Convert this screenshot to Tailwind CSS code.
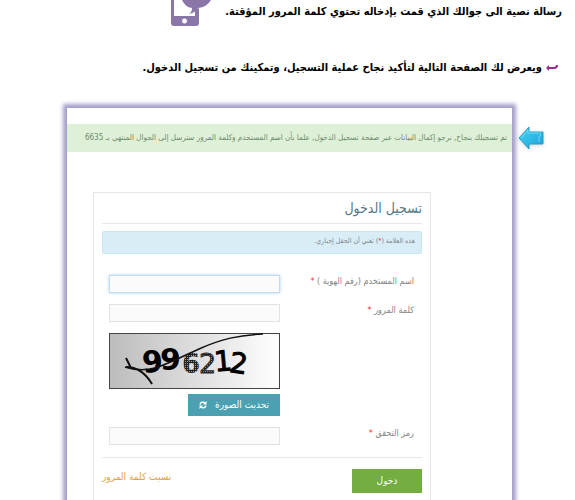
<!DOCTYPE html>
<html lang="ar" dir="rtl">
<head>
    <meta charset="utf-8"/>
    <meta content="width=device-width, initial-scale=1.0" name="viewport"/>
    <title>تسجيل الدخول</title>
    <script src="https://cdn.jsdelivr.net/npm/@tailwindcss/browser@4"></script>
</head>
<body class="bg-white font-['DejaVu_Sans_Condensed','DejaVu_Sans',sans-serif] text-black">
    <main class="flex flex-col h-screen overflow-hidden">
        <div class="flex items-start h-14 pr-[13px] gap-3">
            <p class="text-[11px] leading-6 font-bold whitespace-nowrap">رسالة نصية الى جوالك الذي قمت بإدخاله تحتوي كلمة المرور المؤقتة.</p>
            <svg class="w-[42px] h-[26px] shrink-0" viewBox="0 0 42 26" fill="#8b76a8">
                <path fill-rule="evenodd" d="M0 0h3v16h21V10l4-2v15q0 3-3 3H3q-3 0-3-3zM13.500 18.500a2.500 2.500 0 1 0 .01 0z"/>
                <path d="M11 0q3 7 10 8 0 4-3 6 6-1 9-6 9-1 13-8z"/>
            </svg>
        </div>
        <div class="flex items-center pr-[17px] gap-1">
            <svg class="w-[12px] h-[8px] shrink-0" viewBox="0 0 12 8" fill="#9b2a91">
                <path d="M0 4l3-3v2h5q2 0 2-2h2q0 4-4 4H3v2z"/>
            </svg>
            <p class="text-[11px] leading-6 font-bold whitespace-nowrap">ويعرض لك الصفحة التالية لتأكيد نجاح عملية التسجيل، وتمكينك من تسجيل الدخول.</p>
        </div>

        <section class="relative flex-1 flex flex-col mt-7 mr-[63px] ml-[67px] pt-4 shadow-[0_0_4px_4px_#a49fca]">
            <svg class="absolute top-[17px] -right-[33px] w-[27px] h-[26px] drop-shadow-sm" viewBox="0 0 27 26">
                <defs>
                    <linearGradient id="arrow" x1="0" y1="0" x2="1" y2="1">
                        <stop offset="0" stop-color="#45d6f5"/>
                        <stop offset="1" stop-color="#1ba0d8"/>
                    </linearGradient>
                </defs>
                <path d="M1 13L11 2v5h14v12H11v5z" fill="url(#arrow)" stroke="#2a9cc4"/>
                <path d="M3 13l7-8v3h13M23 9l-2 3v5" fill="none" stroke="#6fdcf5"/>
            </svg>

            <p class="h-7 px-[5px] bg-[#dff0d8] text-[#6c8c6c] text-[8px] leading-7 whitespace-nowrap">تم تسجيلك بنجاح, نرجو إكمال البيانات عبر صفحة تسجيل الدخول, علما بأن اسم المستخدم وكلمة المرور سترسل إلى الجوال المنتهي بـ 6635</p>

            <form class="flex-1 mt-10 mr-[81px] ml-[26px] px-2 border border-b-0 border-[#e6e6e6]">
                <h1 class="h-[31px] text-[14px] leading-[31px] text-[#547988] border-b border-[#e8e8e8]">تسجيل الدخول</h1>
                <p class="h-[23px] mt-[7px] px-[6px] rounded-xs border border-[#c4e9f2] bg-[#d9edf7] text-[#7b868b] text-[7px] leading-[18px]">هذه العلامة (<span class="text-red-500">*</span>) تعني أن الحقل إجباري.</p>

                <div class="flex flex-col pr-2 pl-[7px] mt-[21px] gap-[11px] text-[9px] text-[#858585]">
                    <div class="flex justify-between items-start">
                        <label for="user" class="leading-3">اسم المستخدم (رقم الهوية ) <span class="text-red-500">*</span></label>
                        <input id="user" type="text" class="w-[171px] h-[18px] px-1 bg-[#fbfbfb] border border-[#c3d9ec] shadow-[0_0_3px_#a9d2f2] outline-none"/>
                    </div>
                    <div class="flex justify-between items-start">
                        <label for="password" class="leading-3">كلمة المرور <span class="text-red-500">*</span></label>
                        <input id="password" type="password" class="w-[171px] h-[18px] px-1 bg-[#fbfbfb] border border-[#e2e2e2]"/>
                    </div>
                    <div class="flex flex-col self-end gap-[5px]">
                        <svg class="w-[171px] h-[56px]" viewBox="0 0 171 56" direction="ltr" role="img" aria-label="996212">
                            <defs>
                                <linearGradient id="shade">
                                    <stop offset="0" stop-color="#bcbcbc"/>
                                    <stop offset="1" stop-color="#fff"/>
                                </linearGradient>
                                <pattern id="grain" width="2" height="2" patternUnits="userSpaceOnUse">
                                    <rect width="2" height="2" fill="#222"/>
                                    <rect width="1" height="1" fill="#999"/>
                                </pattern>
                            </defs>
                            <rect x="0.5" y="0.5" width="170" height="55" fill="url(#shade)" stroke="#444"/>
                            <g font-family="DejaVu Sans, sans-serif" font-weight="bold">
                                <text x="33" y="39" font-size="30" transform="rotate(-5 44 28)">9</text>
                                <text x="51" y="37" font-size="30">9</text>
                                <text x="73" y="40" font-size="26" fill="url(#grain)">6</text>
                                <text x="90" y="40" font-size="27" font-weight="normal" fill="url(#grain)" stroke="#333">2</text>
                                <text x="105" y="38" font-size="28" font-weight="normal" stroke="#000" transform="rotate(-5 112 28)">1</text>
                                <text x="121" y="40" font-size="28" font-weight="normal" stroke="#000" transform="rotate(8 129 28)">2</text>
                            </g>
                            <path d="M16 34Q31 39 46 35C62 30 76 22 90 16 112 6 130 2 154 1" fill="none" stroke="#111" stroke-width="1.500"/>
                            <path d="M17 25l5 10M17 34q16 0 26 17" fill="none" stroke="#111" stroke-width="2"/>
                        </svg>
                        <button type="button" class="flex items-center justify-center gap-2 w-[92px] h-[22px] bg-[#4ba0b1] text-white text-[10px] leading-5 whitespace-nowrap">
                            تحديث الصورة
                            <svg class="w-2 h-2" viewBox="0 0 16 16" fill="none" stroke="#fff" stroke-width="3">
                                <path d="M2 7a6 6 0 0 1 10-3M14 9a6 6 0 0 1-10 3"/>
                                <path d="M15 0v7H8zM1 16V9h7z" fill="#fff" stroke="none"/>
                            </svg>
                        </button>
                    </div>
                    <div class="flex justify-between items-start">
                        <label for="code" class="leading-3">رمز التحقق <span class="text-red-500">*</span></label>
                        <input id="code" type="text" class="w-[171px] h-[18px] px-1 bg-[#fbfbfb] border border-[#e2e2e2]"/>
                    </div>
                </div>

                <div class="flex justify-between items-start mt-3 pt-[11px] border-t border-[#e8e8e8]">
                    <button type="submit" class="w-[70px] h-6 bg-[#74ae43] text-white text-[10px] leading-6">دخول</button>
                    <a href="#" class="text-[#dfa144] text-[10px] leading-4">نسيت كلمة المرور</a>
                </div>
            </form>
        </section>
    </main>
</body>
</html>
